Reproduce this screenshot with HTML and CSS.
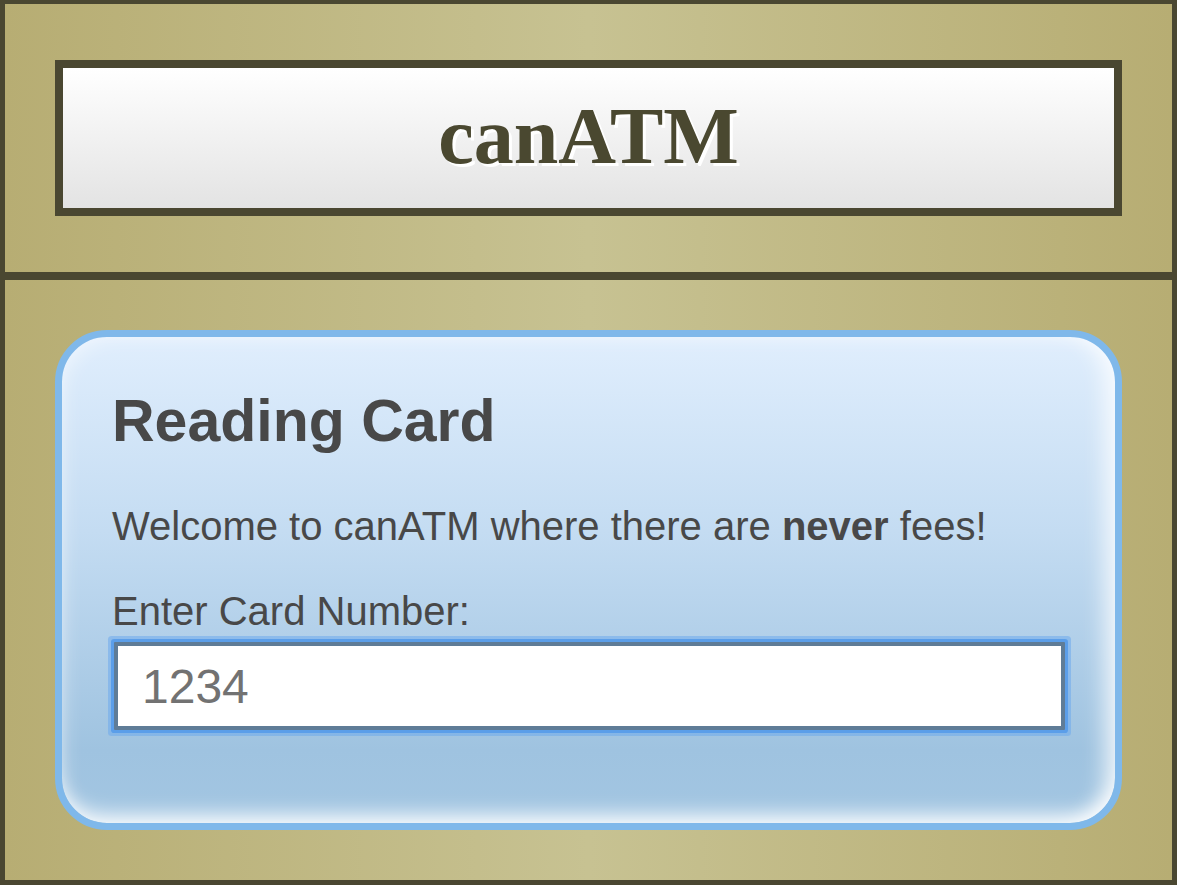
FILE: index.html
```html
<!DOCTYPE html>
<html lang="en">
<head>
<meta charset="utf-8">
<title>canATM</title>
<link rel="stylesheet" href="styles.css">
</head>
<body>
<div class="frame">
  <header class="header">
    <div class="title-box">
      <h1 class="title">canATM</h1>
    </div>
  </header>
  <main class="main">
    <section class="card">
      <h2 class="card-title">Reading Card</h2>
      <p class="welcome">Welcome to canATM where there are <strong>never</strong> fees!</p>
      <label class="field-label" for="card">Enter Card Number:</label>
      <input class="card-input" id="card" type="text" value="1234" autofocus>
    </section>
  </main>
</div>
<script src="script.js"></script>
</body>
</html>
```

FILE: styles.css
```css
* { box-sizing: border-box; }
html, body { margin: 0; padding: 0; }
body {
  width: 1177px;
  height: 885px;
  overflow: hidden;
  font-family: "Liberation Sans", Arial, Helvetica, sans-serif;
}
.frame {
  width: 1177px;
  height: 885px;
  border: 5px solid #4a4731;
  border-top-width: 4px;
  background: linear-gradient(to right, #b7ad73 0%, #c7c292 50%, #b7ad73 100%);
  display: flex;
  flex-direction: column;
}
.header {
  height: 272px;
  padding: 56px 50px;
  border-bottom: 4px solid #4a4731;
}
.title-box {
  height: 156px;
  border: 8px solid #4a4731;
  background: linear-gradient(to bottom, #ffffff 0%, #e3e3e3 100%);
  display: flex;
  align-items: center;
  justify-content: center;
}
.title {
  margin: 0;
  font-family: "Liberation Serif", "Times New Roman", serif;
  font-weight: bold;
  font-size: 80px;
  line-height: 1;
  color: #4a4830;
  text-shadow: 3px 3px 0 #ffffff;
  position: relative;
  top: -2px;
}
.main {
  flex: 1;
  border-top: 4px solid #4a4731;
  padding: 50px 50px;
}
.card {
  height: 500px;
  border: 7px solid #7fb8ea;
  border-radius: 52px;
  padding: 52px 50px 0 50px;
  background: linear-gradient(to bottom, #e0eefd 0%, #c4dcf2 40%, #9fc3e0 85%, #a3c6e2 100%);
  box-shadow:
    inset 0 -20px 20px -12px rgba(255, 255, 255, 0.9),
    inset -22px 0 22px -12px rgba(255, 255, 255, 0.8),
    inset 10px 10px 20px -10px rgba(255, 255, 255, 0.5);
  color: #484848;
}
.card-title {
  margin: 0 0 50px 0;
  font-size: 59px;
  line-height: 64px;
  font-weight: bold;
}
.welcome {
  margin: 0 0 39px 0;
  font-size: 40px;
  line-height: 46px;
}
.welcome strong { font-weight: bold; }
.field-label {
  display: block;
  margin: 0 0 8px 0;
  font-size: 40px;
  line-height: 46px;
}
.card-input {
  display: block;
  width: calc(100% - 2px);
  height: 88px;
  margin: 0 0 0 2px;
  padding: 0 24px;
  border: 4px solid #5f7c97;
  border-radius: 1px;
  background: #ffffff;
  font-family: "Liberation Sans", Arial, Helvetica, sans-serif;
  font-size: 48px;
  color: #727272;
  caret-color: #555555;
  outline: none;
  box-shadow: 0 0 0 3px #5b9ee9, 0 0 0 6px rgba(110, 170, 236, 0.55);
}
```

FILE: script.js
```js
var el = document.getElementById('card');
el.focus();
el.setSelectionRange(el.value.length, el.value.length);
```
